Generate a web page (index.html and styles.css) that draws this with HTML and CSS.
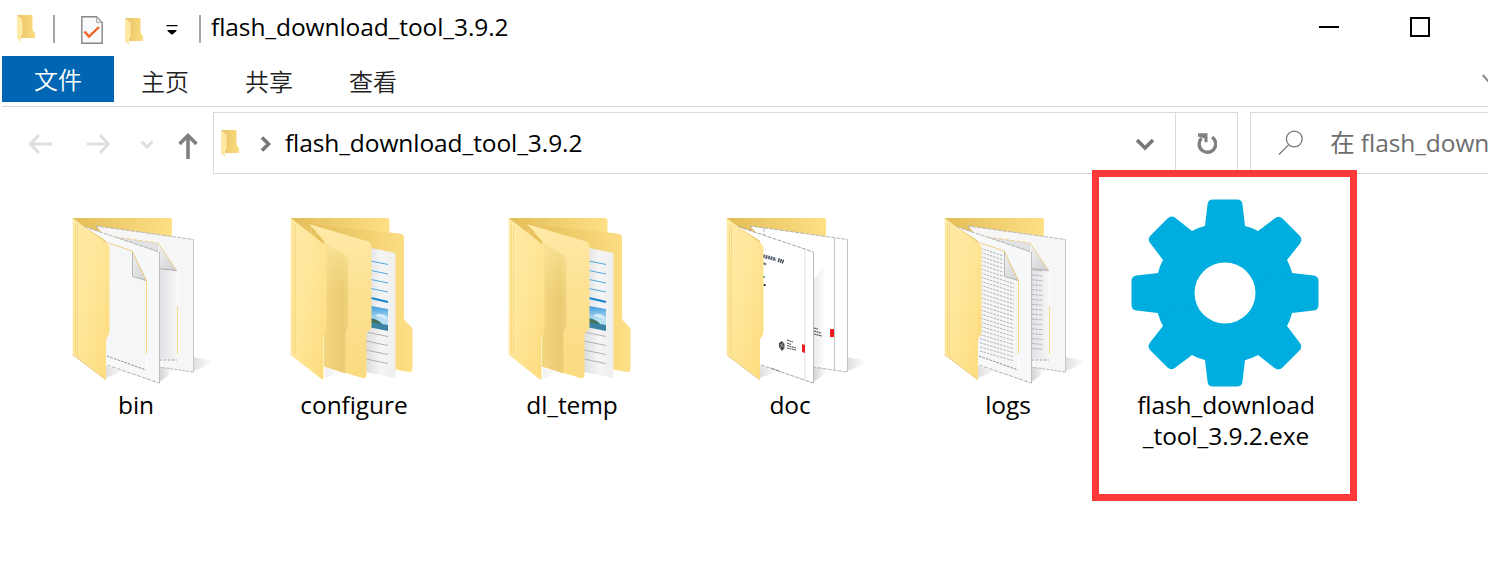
FILE: index.html
```html
<!DOCTYPE html>
<html lang="zh-CN">
<head>
<meta charset="utf-8">
<title>flash_download_tool_3.9.2</title>
<link rel="stylesheet" href="styles.css">
</head>
<body>
<svg class="defs" width="0" height="0" aria-hidden="true">
  <defs>
    <linearGradient id="gBack" x1="0" x2="1" y1="0" y2="0"><stop offset="0" stop-color="#e3bd58"/><stop offset="1" stop-color="#fee086"/></linearGradient>
    <linearGradient id="gFlap" x1="0" x2="1" y1="0" y2="1"><stop offset="0" stop-color="#ffeaa7"/><stop offset=".45" stop-color="#ffe69a"/><stop offset="1" stop-color="#fddb7b"/></linearGradient>
    <linearGradient id="gFlapMid" x1="0" x2="0" y1="0" y2="1"><stop offset="0" stop-color="#ffeaa8"/><stop offset=".4" stop-color="#fde295"/><stop offset="1" stop-color="#fbdb80"/></linearGradient>
    <linearGradient id="gShade" x1="0" x2="1" y1="0" y2="0"><stop offset="0" stop-color="#f3d680"/><stop offset=".75" stop-color="#e9cb72"/><stop offset="1" stop-color="#f0d47e"/></linearGradient>
    <linearGradient id="gShadeFade" x1="0" x2="0" y1="0" y2="1"><stop offset="0" stop-color="#fff" stop-opacity=".25"/><stop offset=".4" stop-color="#fff"/></linearGradient>
    <mask id="mShade"><rect x="40" y="36" width="40" height="140" fill="url(#gShadeFade)"/></mask>
    <linearGradient id="gPaper" x1="0" x2="1" y1="0" y2="0"><stop offset="0" stop-color="#dcdde0"/><stop offset=".5" stop-color="#f5f5f6"/><stop offset="1" stop-color="#eeeeef"/></linearGradient>
    <linearGradient id="gRear" gradientUnits="userSpaceOnUse" x1="99" x2="118" y1="0" y2="0"><stop offset="0" stop-color="#dfe1e4"/><stop offset="1" stop-color="#f6f7f8"/></linearGradient>
    <linearGradient id="gRearSoft" gradientUnits="userSpaceOnUse" x1="99" x2="112" y1="0" y2="0"><stop offset="0" stop-color="#e8e9ea"/><stop offset="1" stop-color="#fff"/></linearGradient>
    <linearGradient id="gFold" x1="0" x2="1" y1="0" y2="1"><stop offset="0" stop-color="#f1f1f2"/><stop offset="1" stop-color="#cfd0d2"/></linearGradient>
    <linearGradient id="gShadow" x1="0" x2="1" y1="0" y2="0"><stop offset="0" stop-color="#d2d2d2"/><stop offset="1" stop-color="#fff"/></linearGradient>
    <linearGradient id="gSky" x1="0" x2="0" y1="0" y2="1"><stop offset="0" stop-color="#3f9bdc"/><stop offset=".55" stop-color="#b9dff3"/></linearGradient>
    <linearGradient id="gMiniBack" x1="0" x2="1" y1="0" y2="0"><stop offset="0" stop-color="#e9c05f"/><stop offset="1" stop-color="#fbdc82"/></linearGradient>

    <symbol id="back" viewBox="0 0 160 190"><path d="M12.7 13H110q2 0 2 2V80L48 130Z" fill="url(#gBack)"/></symbol>
    <symbol id="flap" viewBox="0 0 160 190">
      <path d="M12.7 13 47 38.5q2.5 2 2.5 5V126q0 3-1.500 5l-2 3.500V175L12.700 150Z" fill="url(#gFlap)"/>
      <path d="M15.500 19V149M17.500 20V152" stroke="#f6d67d" stroke-width=".8" fill="none"/>
      <path d="M13 150 45.800 174.800" stroke="#e3c98a" stroke-width=".9"/>
    </symbol>
    <symbol id="shadows" viewBox="0 0 160 190">
      <path d="M46 161 64 166 46 173Z" fill="url(#gShadow)" opacity=".7"/>
      <path d="M99 160 113 165Q110 171 99 177Z" fill="url(#gShadow)"/>
      <path d="M133.500 152 153 156Q146 162 133.500 166Z" fill="url(#gShadow)" opacity=".7"/>
    </symbol>
    <symbol id="papers" viewBox="0 0 160 190">
      <path d="M36.500 21 133.500 34.500V167L98 162 60 50Z" fill="#f6f6f7"/>
      <path d="M55 32 98 38 116.500 65.500 117.500 156 98 153Z" fill="url(#gRear)"/>
      <path d="M36.500 28V21L133.500 34.500" fill="none" stroke="#b7b7b7" stroke-dasharray="4 1.200"/>
      <path d="M133.500 34V167" stroke="#c5c5c5"/>
      <path d="M133 167 99 162" stroke="#b5b5b5" stroke-dasharray="3 1"/>
      <path d="M55 32 98 38" stroke="#f4d082" stroke-dasharray="4 2"/>
      <path d="M98 38V63.500L116.500 65.500Z" fill="url(#gFold)"/>
      <path d="M98 38 116.500 65.500" stroke="#ecc875" stroke-width=".8"/>
      <path d="M98 63.500 116.500 65.500" stroke="#999" stroke-width=".8"/>
      <path d="M117.500 66V102" stroke="#fff"/>
      <path d="M117.500 101V149" stroke="#f7d98f"/>
      <path d="M99 155H117" stroke="#a8a8a8" stroke-dasharray="3 1.300"/>
      <path d="M24 21.500 99.500 48V178.500L46 159V36Z" fill="#f7f8f9"/>
      <path d="M42 36 72 46 86.500 76V165L46 151V38Z" fill="#f4f6f8"/>
      <path d="M24 21.500 99.500 47" stroke="#b5b5b5" stroke-dasharray="4 1.300"/>
      <path d="M99.500 47V178.500" stroke="#bdbdbd"/>
      <path d="M47 160 99 178" stroke="#b1b1b1" stroke-dasharray="4 1.300"/>
      <path d="M40 35 72 46 86.500 76" fill="none" stroke="#edc976" stroke-width=".9"/>
      <path d="M72 46V71.500L86.500 76Z" fill="url(#gFold)"/>
      <path d="M72.500 46V71.500L86.500 75.500" fill="none" stroke="#aaa" stroke-width=".8"/>
      <path d="M72 46 86.500 75.500" stroke="#edc976" stroke-width=".8"/>
      <path d="M86.500 76V149" stroke="#f9d886"/><path d="M86.500 149V165" stroke="#fff"/>
      <path d="M47 151 86 165" stroke="#8d8d8d" stroke-dasharray="2.500 1.200"/>
    </symbol>
    <symbol id="folderInFolder" viewBox="0 0 160 190">
      <path d="M12.700 13H109q2.500 0 2.500 2.500V80L48 130Z" fill="url(#gBack)"/>
      <path d="M31 19 121.500 28.500q4.500.5 4.500 4V113q0 2 1.500 3l5 5q2 2 2 4v38.500q0 4-3.500 3.500L93 160Z" fill="url(#gBack)"/>
      <path d="M88 42 117.500 48V173L88 167Z" fill="url(#gPaper)"/>
      <g stroke="#53a9dc" stroke-width="1"><path d="M93 56 110 59.500M93 65.500 110 69M93 74.500 110 78M93 83.500 110 87"/><path d="M93 93 110 97" stroke="#1685cd" stroke-width="2.200"/></g>
      <path d="M93 101 110 104V126L93 122.500Z" fill="url(#gSky)"/>
      <path d="M93 113Q100 114 104 119L110 120V126L93 122.500Z" fill="#3a83a3"/><path d="M93 114Q100 115 104 119L93 117Z" fill="#4b6d50"/>
      <path d="M97 111Q102 106 109 112L109 114Z" fill="#eef8fc" opacity=".7"/>
      <path d="M88 127 110 131.500M88 136 110 140.500M88 145 110 149.500M88 154 110 158.500" stroke="#aaa" stroke-width=".9"/>
      <path d="M31 19 90 36.500q3.500 1.500 3.500 5V121q0 2-1 3l-3 3.500q-1 1-1 3V170q-.5 4-4 3L46 161.500V36Z" fill="url(#gFlapMid)"/>
      <path d="M46 37 66 49Q70.500 52 70.500 57V119q0 3-2 6l-1 3V168.500L46 161.500Z" fill="url(#gShade)" mask="url(#mShade)"/>
      <path d="M33.500 24V32M37.500 25V34" stroke="#f3d175" stroke-width=".8"/>
      <path d="M47 163 65 167.500 47 173Z" fill="url(#gShadow)" opacity=".35"/>
      <path d="M12.700 13 46 39q2.500 2 2.500 4V126q0 2-1 3l-2 3V173q0 2-2 1L12.700 150Z" fill="url(#gFlap)"/>
      <path d="M15.500 19V147M17.500 20V149" stroke="#f6d67d" stroke-width=".8"/>
    </symbol>
    <symbol id="mini" viewBox="0 0 20 28">
      <path d="M1 1H15.500Q16.500 1 16.500 2V16l2.500 3v5H5Z" fill="url(#gMiniBack)"/>
      <path d="M1 1 6.500 5.500V20L5 22V28L1 24.500Z" fill="#ffe9a6"/>
    </symbol>
  </defs>
</svg>

<div class="window">
  <header class="titlebar">
    <svg class="mini" viewBox="0 0 20 28"><use href="#mini"/></svg>
    <i class="sep"></i>
    <svg class="check" viewBox="0 0 22 28" fill="none"><path d="M.800.800H15.500L21.200 6.500V27.200H.800Z" fill="#f8f9fa" stroke="#858585" stroke-width="1.400"/><path d="M15.500 1V6.500H21Z" fill="#e4e4e4" stroke="#999" stroke-width=".8"/><path d="M3.500 15.500 8 20.500 18 11" stroke="#f4631e" stroke-width="2.400"/></svg>
    <svg class="mini second" viewBox="0 0 20 28"><use href="#mini"/></svg>
    <svg class="quick" viewBox="0 0 12 10"><path d="M.5 0H11.500V1.200H.5ZM1.500 5H10.500V6L6.500 9.500H5.500L1.500 6Z" fill="#000"/></svg>
    <i class="sep last"></i>
    <span class="title">flash_download_tool_3.9.2</span>
    <div class="controls">
      <svg width="22" height="22" viewBox="0 0 22 22"><path d="M1 10H21" stroke="#000" stroke-width="2"/></svg>
      <svg width="20" height="20" viewBox="0 0 20 20"><path d="M1 1H19V19H1Z" stroke="#000" stroke-width="2" fill="none"/></svg>
    </div>
  </header>

  <nav class="tabs">
    <span class="tab active">文件</span><span class="tab">主页</span><span class="tab">共享</span><span class="tab">查看</span>
    <svg class="expand" viewBox="0 0 12 9"><path d="M.8 1 6 7 11.200 1" fill="none" stroke="#888" stroke-width="2"/></svg>
  </nav>

  <div class="navrow">
    <div class="arrows">
      <svg width="24" height="22" viewBox="0 0 24 22" fill="none" stroke="#dedede" stroke-width="2.800"><path d="M2 11H24M11 2 2.500 11 11 20"/></svg>
      <svg width="24" height="22" viewBox="0 0 24 22" fill="none" stroke="#dedede" stroke-width="2.800"><path d="M0 11H22M13 2 21.500 11 13 20"/></svg>
      <svg class="history" width="14" height="9" viewBox="0 0 14 9" fill="none" stroke="#dedede" stroke-width="3"><path d="M1.500 1.500 7 7 12.500 1.500"/></svg>
      <svg class="up" width="20" height="26" viewBox="0 0 20 26" fill="none" stroke="#808080" stroke-width="3.600"><path d="M10 2V26M1.500 11 10 2.500 18.500 11"/></svg>
    </div>
    <div class="address">
      <svg class="mini" viewBox="0 0 20 28"><use href="#mini"/></svg>
      <svg class="crumb" width="11" height="16" viewBox="0 0 11 16"><path d="M2 1.500 8.500 8 2 14.500" fill="none" stroke="#777" stroke-width="3.600"/></svg>
      <span class="path">flash_download_tool_3.9.2</span>
      <svg class="drop" width="20" height="13" viewBox="0 0 20 13"><path d="M2 2 10 10 18 2" fill="none" stroke="#777" stroke-width="3.600"/></svg>
      <div class="refresh"><svg width="20" height="22" viewBox="0 0 20 22"><path d="M15.100 4.100A8.300 8.300 0 1 1 4.500 5.200" fill="none" stroke="#808080" stroke-width="3.400"/><path d="M1 .3H10.500V9.300H7.500V5.500L1 3.500Z" fill="#808080"/></svg></div>
    </div>
    <div class="search">
      <svg width="26" height="26" viewBox="0 0 26 26" fill="none" stroke="#777" stroke-width="1.300"><circle cx="16.300" cy="9" r="7.900"/><path d="M10.700 14.600 1 24.500"/></svg>
      <span>在 flash_down</span>
    </div>
  </div>

  <main class="files">
    <div class="item"><svg class="icon" viewBox="0 0 160 190"><use href="#shadows"/><use href="#back"/><use href="#papers"/><use href="#flap"/></svg><span class="name">bin</span></div>
    <div class="item"><svg class="icon" viewBox="0 0 160 190"><use href="#folderInFolder"/></svg><span class="name">configure</span></div>
    <div class="item"><svg class="icon" viewBox="0 0 160 190"><use href="#folderInFolder"/></svg><span class="name">dl_temp</span></div>
    <div class="item"><svg class="icon" viewBox="0 0 160 190">
      <use href="#shadows"/><use href="#back"/>
      <path d="M36.500 21 133.500 34.500V167L98 162 60 50Z" fill="#fff"/>
      <path d="M99 75 112 60V163.500L99 162Z" fill="url(#gRearSoft)"/>
      <path d="M36.500 28V21L133.500 34.500M50 23V31M133 167 99 162" fill="none" stroke="#aaa" stroke-width=".9" stroke-dasharray="4 1.200"/>
      <path d="M133.500 34V167M120.500 33V165" stroke="#c2c2c2"/>
      <path d="M116 124H120V132H116Z" fill="#ed1c24"/>
      <path d="M100 123 104 124M100 126 107 128M100 129 108 131" stroke="#555" stroke-width="1.200" stroke-dasharray="2 .5"/>
      <path d="M24 21.500 99.500 47V178.500L46 159V36Z" fill="#fff"/>
      <path d="M24 21.500 99.500 47M47 160 99 178" stroke="#999" stroke-dasharray="4 1.200" stroke-width=".9"/>
      <path d="M99.500 47V178.500" stroke="#bbb"/><path d="M91 46V175" stroke="#e9eaeb" stroke-width="1.500"/>
      <path d="M49 51 62 54.500" stroke="#5d6678" stroke-width="3.600" stroke-dasharray="2 .6"/>
      <path d="M64 55 70 57" stroke="#444b58" stroke-width="4" stroke-dasharray="1.500 .7"/>
      <path d="M49 58 52 59.500" stroke="#777" stroke-width="2"/><path d="M50 71V73" stroke="#46a57b" stroke-width="2"/><path d="M49.500 80H51.500" stroke="#222" stroke-width="2"/>
      <path d="M65 138 68 136 70.500 139V143L68 146 65 142Z" fill="#444"/><path d="M66 139 70 142M66 143 69 138" stroke="#ccc" stroke-width=".6"/>
      <path d="M73 135 79 137M73 138 77 139.500M73 140.500 82 143M73 143 82 145" stroke="#555" stroke-width="1.100" stroke-dasharray="2 .5"/>
      <path d="M88 139 91 140V148L88 147Z" fill="#ed1c24"/><path d="M57 163 66 166.500" stroke="#777" stroke-dasharray="2 .7"/>
      <use href="#flap"/>
    </svg><span class="name">doc</span></div>
    <div class="item"><svg class="icon" id="logs" viewBox="0 0 160 190"><use href="#shadows"/><use href="#back"/><use href="#papers"/><g class="front-lines"></g><g class="rear-lines"></g><use href="#flap"/></svg><span class="name">logs</span></div>
    <div class="item"><svg class="icon gear" viewBox="-95 -95 190 190">
      <g fill="#00addf"><circle r="60"/>
        <g id="tooth"><path d="M0 0-22-66.500-20-67-17.500-88.500Q-17-93.500-12-93.500H12Q17-93.500 17.500-88.500L20-67Q27-65.500 33-62L49.500-74.500Q53.500-78 57.500-74.500L74.500-57.500Q78-53.500 75-49.500L62-33Q65.500-27 67-20Z"/></g>
        <use href="#tooth" transform="rotate(90)"/><use href="#tooth" transform="rotate(180)"/><use href="#tooth" transform="rotate(270)"/></g>
      <circle r="30.500" fill="#fff"/></svg><span class="name">flash_download<br>_tool_3.9.2.exe</span></div>
  </main>
  <div class="highlight"></div>
</div>
<script src="lines.js"></script>
</body>
</html>
```

FILE: styles.css
```css
* { box-sizing: border-box; }
body { margin: 0; background: #fff; color: #000; font-family: "Open Sans", "Noto Sans CJK SC", sans-serif; }
svg { display: block; flex: none; }
.defs { position: absolute; }
.window { position: relative; width: 1488px; height: 568px; overflow: hidden; }

.titlebar { display: flex; align-items: flex-start; height: 56px; padding: 14px 58px 0 16px; }
.mini { width: 20px; height: 28px; }
.sep { width: 2px; height: 28px; margin: 1px 26px 0 17px; background: #a5a5a5; }
.check { width: 22px; height: 28px; margin-top: 2px; }
.mini.second { margin: 3px 0 0 21px; }
.quick { width: 12px; height: 10px; margin: 11px 0 0 22px; }
.sep.last { margin: 1px 10px 0 21px; }
.title { margin-top: -1px; font-size: 24.500px; line-height: 28px; letter-spacing: -.08px; white-space: nowrap; }
.controls { display: flex; gap: 70px; margin: 3px 0 0 auto; }

.tabs { display: flex; height: 51px; margin-left: 2px; border-bottom: 1px solid #d9d9d9; font-family: "Noto Sans CJK SC", sans-serif; font-size: 24px; font-weight: 350; color: #222; }
.tab { width: 104px; height: 46px; line-height: 49px; text-align: center; }
.tab.active { width: 112px; margin-right: -1px; line-height: 45px; background: #0066b4; color: #fff; }
.expand { width: 12px; height: 9px; margin: 18px -6px 0 auto; }

.navrow { display: flex; height: 67px; padding-top: 5px; }
.arrows { display: flex; align-items: center; width: 213px; padding: 2px 0 0 28px; }
.arrows svg + svg { margin-left: 35px; }
.arrows .history { margin-left: 29px; }
.arrows .up { margin: 4px 0 0 24px !important; }
.address { display: flex; align-items: center; width: 1026px; height: 62px; border: 1px solid #d9d9d9; padding-left: 6px; }
.crumb { margin: 1px 0 0 20px; }
.path { margin-left: 14px; font-size: 24.500px; letter-spacing: -.08px; line-height: 60px; }
.drop { margin: 3px 20px 0 auto; }
.refresh { display: flex; align-items: center; justify-content: center; width: 62px; height: 60px; padding-top: 2px; border-left: 1px solid #d9d9d9; }
.search { display: flex; align-items: center; width: 238px; height: 62px; margin-left: 12px; padding-left: 27px; border: 1px solid #d9d9d9; border-right: 0; overflow: hidden; color: #6d6d6d; font-size: 24.500px; white-space: nowrap; }
.search span { margin: -4px 0 0 26px; letter-spacing: -.08px; }

.files { display: grid; grid-template-columns: repeat(6, 218px); padding: 24px 0 0 27px; }
.item { display: flex; flex-direction: column; align-items: center; }
.icon { width: 160px; height: 190px; margin: 7px 0 -6px 8px; }
.icon.gear { width: 190px; margin: 0 2px 1px 0; }
.name { font-size: 24.500px; line-height: 31px; text-align: center; letter-spacing: -.08px; }
.front-lines path, .rear-lines path { fill: none; stroke: #aaa; stroke-width: .9; stroke-dasharray: 2.500 1; }
.highlight { position: absolute; left: 1092px; top: 170px; width: 265px; height: 331px; border: 7px solid #fc3939; }
```

FILE: lines.js
```js
// Ruled text lines on the two pages of the "logs" folder.
const NS = "http://www.w3.org/2000/svg";
function rule(group, d) {
  const p = document.createElementNS(NS, "path");
  p.setAttribute("d", d);
  group.appendChild(p);
}
const front = document.querySelector("#logs .front-lines");
for (let i = 0; i < 26; i++) {
  const y = 43 + i * 4.12;
  const end = i < 6 ? 71 : 82;
  rule(front, `M48 ${y} L${end} ${y + (end - 48) * (0.34 - i * 0.002)}`);
}
const rear = document.querySelector("#logs .rear-lines");
for (let i = 0; i < 17; i++) {
  const y = 65 + i * 4.9;
  rule(rear, `M100 ${y} L111 ${y + 1}`);
}
```
